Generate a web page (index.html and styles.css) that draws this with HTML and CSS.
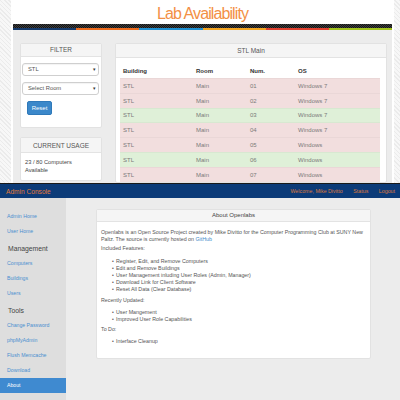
FILE: index.html
```html
<!DOCTYPE html>
<html>
<head>
<meta charset="utf-8">
<title>Openlabs</title>
<link rel="stylesheet" href="styles.css">
</head>
<body>
<section class="lab">
  <div class="lab-page">
    <h1 class="lab-title">Lab Availability</h1>
    <div class="stripe-dark"></div>
    <div class="stripe-colors">
      <span class="c1"></span><span class="c2"></span><span class="c3"></span><span class="c4"></span><span class="c5"></span><span class="c6"></span>
    </div>
    <div class="lab-body">
      <div class="lab-side">
        <div class="lpanel">
          <div class="lpanel-head">FILTER</div>
          <div class="filter-body">
            <div class="fake-select"><span>STL</span><span class="caret">&#9662;</span></div>
            <div class="fake-select"><span>Select Room</span><span class="caret">&#9662;</span></div>
            <button class="btn-reset">Reset</button>
          </div>
        </div>
        <div class="lpanel usage">
          <div class="lpanel-head usage-head">CURRENT USAGE</div>
          <div class="usage-body">23 / 80 Computers Available</div>
        </div>
      </div>
      <div class="lpanel lab-main">
        <div class="lpanel-head main-head">STL Main</div>
        <table class="lab-table">
          <thead>
            <tr><th class="col-b">Building</th><th class="col-r">Room</th><th class="col-n">Num.</th><th>OS</th></tr>
          </thead>
          <tbody>
            <tr class="bad"><td>STL</td><td>Main</td><td>01</td><td>Windows 7</td></tr>
            <tr class="bad"><td>STL</td><td>Main</td><td>02</td><td>Windows 7</td></tr>
            <tr class="ok"><td>STL</td><td>Main</td><td>03</td><td>Windows 7</td></tr>
            <tr class="bad"><td>STL</td><td>Main</td><td>04</td><td>Windows 7</td></tr>
            <tr class="bad"><td>STL</td><td>Main</td><td>05</td><td>Windows</td></tr>
            <tr class="ok"><td>STL</td><td>Main</td><td>06</td><td>Windows</td></tr>
            <tr class="bad"><td>STL</td><td>Main</td><td>07</td><td>Windows</td></tr>
          </tbody>
        </table>
      </div>
    </div>
  </div>
</section>
<section class="admin">
  <nav class="admin-nav">
    <span class="brand">Admin Console</span>
    <div class="nav-links">
      <a href="#">Welcome, Mike Divitto</a>
      <a href="#">Status</a>
      <a href="#">Logout</a>
    </div>
  </nav>
  <div class="admin-body">
    <aside class="sidebar">
      <a class="side-link" href="#">Admin Home</a>
      <a class="side-link" href="#">User Home</a>
      <div class="side-head">Management</div>
      <a class="side-link" href="#">Computers</a>
      <a class="side-link" href="#">Buildings</a>
      <a class="side-link" href="#">Users</a>
      <div class="side-head">Tools</div>
      <a class="side-link" href="#">Change Password</a>
      <a class="side-link" href="#">phpMyAdmin</a>
      <a class="side-link" href="#">Flush Memcache</a>
      <a class="side-link" href="#">Download</a>
      <a class="side-link active" href="#">About</a>
    </aside>
    <main class="admin-main">
      <div class="about">
        <div class="about-head">About Openlabs</div>
        <div class="about-body">
          <p><span class="line">Openlabs is an Open Source Project created by Mike Divitto for the Computer Programming Club at SUNY New</span><span class="line">Paltz. The source is currently hosted on <a href="#">GitHub</a></span></p>
          <p>Included Features:</p>
          <ul>
            <li>Register, Edit, and Remove Computers</li>
            <li>Edit and Remove Buildings</li>
            <li>User Management inluding User Roles (Admin, Manager)</li>
            <li>Download Link for Client Software</li>
            <li>Reset All Data (Clear Database)</li>
          </ul>
          <p>Recently Updated:</p>
          <ul>
            <li>User Mangement</li>
            <li>Improved User Role Capabilities</li>
          </ul>
          <p>To Do:</p>
          <ul>
            <li>Interface Cleanup</li>
          </ul>
        </div>
      </div>
    </main>
  </div>
</section>
</body>
</html>
```
FILE: styles.css
```css
* { box-sizing: border-box; }
html, body { margin: 0; padding: 0; }
body {
  width: 400px;
  height: 400px;
  overflow: hidden;
  font-family: "Liberation Sans", Arial, sans-serif;
  background: #fff;
}

/* ---------- Lab availability ---------- */
.lab {
  height: 183px;
  overflow: hidden;
  padding: 0 6px 0 11px;
  background: #f5f5f5 repeating-linear-gradient(45deg, #ebebeb 0 1px, #f7f7f7 1px 3px);
}
.lab-page {
  height: 100%;
  background: #fff;
  padding: 0 2px;
  display: flex;
  flex-direction: column;
}
.lab-title {
  margin: 0;
  height: 24px;
  line-height: 28px;
  text-align: center;
  font-weight: normal;
  font-size: 16px;
  letter-spacing: -0.9px;
  color: #f39045;
}
.stripe-dark {
  height: 5px;
  background: repeating-conic-gradient(#141414 0 25%, #3c3c3c 0 50%) 0 0 / 2px 2px;
}
.stripe-colors { height: 3px; display: flex; }
.stripe-colors span { flex: 1; }
.c1 { background: #173b6b; }
.c2 { background: #ec6b1d; }
.c3 { background: #1f8fd0; }
.c4 { background: #f3a420; }
.c5 { background: #e0412f; }
.c6 { background: #a1c31e; }

.lab-body {
  flex: 1;
  background: #ececec;
  display: grid;
  grid-template-columns: 82px 1fr;
  column-gap: 13px;
  align-items: start;
  padding: 13px 5px 0 7px;
}
.lpanel {
  background: #fff;
  border: 1px solid #e2e2e2;
  border-radius: 2px;
}
.lpanel-head {
  height: 13px;
  background: #f5f5f5;
  border-bottom: 1px solid #e3e3e3;
  text-align: center;
  font-size: 6.5px;
  line-height: 12px;
  color: #555;
}
.filter-body {
  padding: 6px 2px 12px 1px;
  display: flex;
  flex-direction: column;
  align-items: stretch;
}
.fake-select {
  height: 13px;
  margin-bottom: 6px;
  border: 1px solid #cfcfcf;
  border-radius: 3px;
  display: flex;
  align-items: center;
  justify-content: space-between;
  padding: 0 2px 0 5px;
  font-size: 5.8px;
  color: #555;
  box-shadow: inset 0 1px 1px rgba(0,0,0,0.05);
}
.caret { font-size: 5px; color: #333; }
.btn-reset {
  align-self: flex-start;
  margin: 0 0 0 5px;
  width: 25px;
  height: 14px;
  padding: 0;
  border: 1px solid #2f79b9;
  border-radius: 2px;
  background: #3b88ca;
  color: #fff;
  font-family: inherit;
  font-size: 6px;
}
.usage { margin-top: 9px; }
.usage-head { height: 15px; line-height: 15px; }
.usage-body {
  padding: 5px 5px 6px 4px;
  font-size: 5.7px;
  line-height: 8px;
  color: #444;
}
.main-head { height: 14px; line-height: 14px; }
.lab-table {
  width: calc(100% - 10px);
  margin: 5px 6px 0 4px;
  border-collapse: collapse;
  font-size: 6px;
}
.lab-table th {
  height: 15.7px;
  padding: 2px 3px 0;
  text-align: left;
  font-weight: bold;
  color: #333;
}
.lab-table td {
  height: 14.8px;
  padding: 0 3px;
  color: #7a7a7a;
  border-top: 1px solid rgba(0,0,0,0.03);
}
.col-b { width: 73px; }
.col-r { width: 54px; }
.col-n { width: 48px; }
.lab-table tr.bad { background: #f2dede; }
.lab-table tr.ok { background: #dff0d8; }

/* ---------- Admin console ---------- */
.admin {
  height: 217px;
  display: flex;
  flex-direction: column;
}
.admin-nav {
  height: 15px;
  flex: none;
  border-top: 1px solid #1a1a1a;
  background: #0c3b78;
  display: flex;
  align-items: center;
  justify-content: space-between;
  padding: 0 5px 0 6px;
}
.brand { color: #e27a36; font-size: 6.6px; }
.nav-links { display: flex; gap: 10.5px; font-size: 5.3px; }
.nav-links a { color: #dc7a3c; text-decoration: none; }

.admin-body {
  flex: 1;
  display: flex;
  background: #ececec;
}
.sidebar {
  width: 66px;
  flex: none;
  background: #dedede;
  padding-top: 10.5px;
}
.side-link {
  display: block;
  height: 15px;
  line-height: 15px;
  padding-left: 7px;
  font-size: 5.2px;
  color: #4a8fd0;
  text-decoration: none;
}
.side-link.active { background: #3f8ad0; color: #fff; }
.side-head {
  height: 17px;
  line-height: 19px;
  padding-left: 8px;
  font-size: 6.8px;
  color: #444;
}
.admin-main {
  flex: 1;
  padding: 11px 29px 0 30px;
}
.about {
  background: #fff;
  border: 1px solid #e2e2e2;
  border-radius: 2px;
}
.about-head {
  height: 12px;
  line-height: 11px;
  background: #f5f5f5;
  border-bottom: 1px solid #e3e3e3;
  text-align: center;
  font-size: 6px;
  color: #444;
}
.about-body {
  padding: 7px 5px 9px 4px;
  font-size: 5.3px;
  line-height: 7.2px;
  color: #555;
}
.about-body p { margin: 0 0 2px; }
.about-body .line { display: block; white-space: nowrap; }
.about-body ul { margin: 5px 0 3px; padding-left: 11px; list-style: none; }
.about-body li::before {
  content: "\2022";
  display: inline-block;
  width: 4px;
  font-size: 5px;
}
.about-body a { color: #428bca; text-decoration: none; }
```
